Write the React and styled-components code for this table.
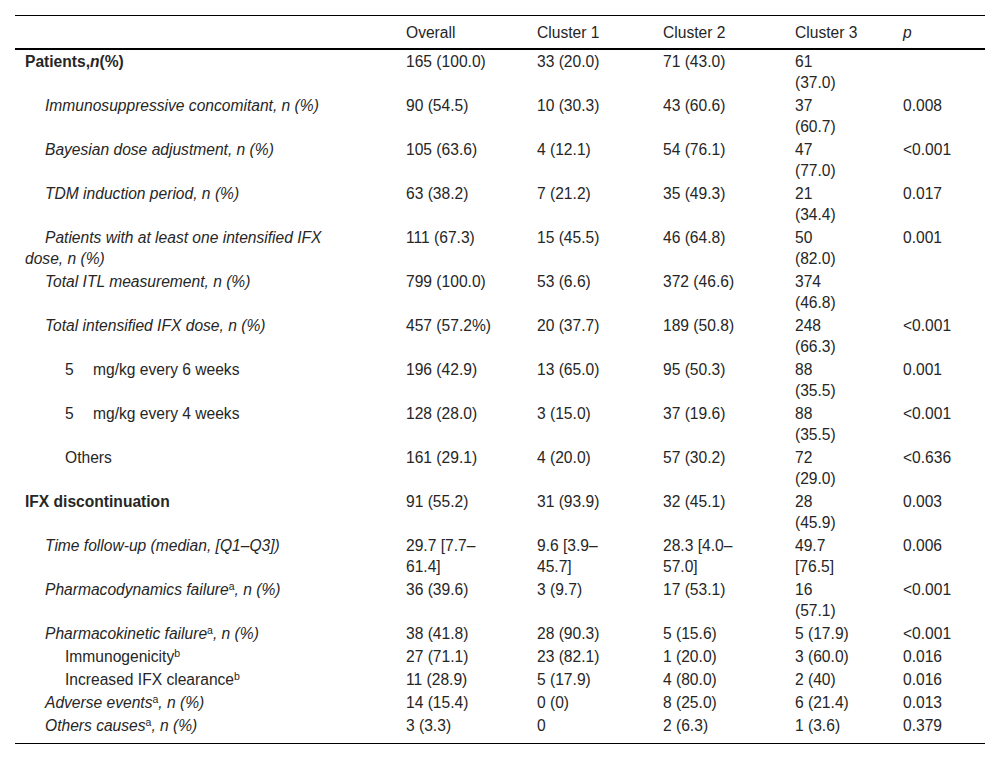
import React from "react";
import styled, { createGlobalStyle } from "styled-components";

const GlobalStyle = createGlobalStyle`
  body {
    margin: 0;
    background: #fff;
    font-family: "Liberation Sans", Arial, sans-serif;
    color: #262626;
  }
`;

const Page = styled.div`
  padding: 15px;
`;

const Table = styled.table`
  width: 970px;
  border-collapse: collapse;
  table-layout: fixed;
  font-size: 15.6px;
  line-height: 21px;
  border-top: 1px solid #000;
  border-bottom: 1px solid #000;
`;

// column widths + right padding that makes numbers wrap like the source
const cols = [
  { w: 381, pr: 51 },
  { w: 131, pr: 27 },
  { w: 126, pr: 36 },
  { w: 132, pr: 34 },
  { w: 108, pr: 40 },
  { w: 92, pr: 8 },
];

const HeadRow = styled.tr`
  border-bottom: 2px solid #000;
`;

const HeadCell = styled.th`
  text-align: left;
  font-weight: normal;
  white-space: nowrap;
  font-style: ${(p) => (p.$italic ? "italic" : "normal")};
  padding: 6px 0 5px 10px;
  vertical-align: top;
`;

const Row = styled.tr``;

const Cell = styled.td`
  vertical-align: top;
  padding: 1px ${(p) => p.$pr}px ${(p) => (p.$last ? 7 : 1)}px 10px;
`;

const LabelCell = styled(Cell)`
  text-indent: ${(p) => p.$level * 20}px;
  font-weight: ${(p) => (p.$bold ? "bold" : "normal")};
  font-style: ${(p) => (p.$italic ? "italic" : "normal")};
`;

const Sup = styled.sup`
  font-style: normal;
  font-size: 10.5px;
  line-height: 0;
  vertical-align: 5px;
`;

const Num = styled.span`
  display: inline-block;
  text-indent: 0;
  width: 28px;
`;

const rows = [
  { label: <>Patients,<i>n</i>(%)</>, bold: true, level: 0, v: ["165 (100.0)", "33 (20.0)", "71 (43.0)", "61 (37.0)", ""] },
  { label: "Immunosuppressive concomitant, n (%)", italic: true, level: 1, v: ["90 (54.5)", "10 (30.3)", "43 (60.6)", "37 (60.7)", "0.008"] },
  { label: "Bayesian dose adjustment, n (%)", italic: true, level: 1, v: ["105 (63.6)", "4 (12.1)", "54 (76.1)", "47 (77.0)", "<0.001"] },
  { label: "TDM induction period, n (%)", italic: true, level: 1, v: ["63 (38.2)", "7 (21.2)", "35 (49.3)", "21 (34.4)", "0.017"] },
  { label: "Patients with at least one intensified IFX dose, n (%)", italic: true, level: 1, v: ["111 (67.3)", "15 (45.5)", "46 (64.8)", "50 (82.0)", "0.001"] },
  { label: "Total ITL measurement, n (%)", italic: true, level: 1, v: ["799 (100.0)", "53 (6.6)", "372 (46.6)", "374 (46.8)", ""] },
  { label: "Total intensified IFX dose, n (%)", italic: true, level: 1, v: ["457 (57.2%)", "20 (37.7)", "189 (50.8)", "248 (66.3)", "<0.001"] },
  { label: <><Num>5</Num>mg/kg every 6 weeks</>, level: 2, v: ["196 (42.9)", "13 (65.0)", "95 (50.3)", "88 (35.5)", "0.001"] },
  { label: <><Num>5</Num>mg/kg every 4 weeks</>, level: 2, v: ["128 (28.0)", "3 (15.0)", "37 (19.6)", "88 (35.5)", "<0.001"] },
  { label: "Others", level: 2, v: ["161 (29.1)", "4 (20.0)", "57 (30.2)", "72 (29.0)", "<0.636"] },
  { label: "IFX discontinuation", bold: true, level: 0, v: ["91 (55.2)", "31 (93.9)", "32 (45.1)", "28 (45.9)", "0.003"] },
  { label: "Time follow-up (median, [Q1–Q3])", italic: true, level: 1, v: ["29.7 [7.7–61.4]", "9.6 [3.9–45.7]", "28.3 [4.0–57.0]", "49.7 [76.5]", "0.006"] },
  { label: <>Pharmacodynamics failure<Sup>a</Sup>, n (%)</>, italic: true, level: 1, v: ["36 (39.6)", "3 (9.7)", "17 (53.1)", "16 (57.1)", "<0.001"] },
  { label: <>Pharmacokinetic failure<Sup>a</Sup>, n (%)</>, italic: true, level: 1, v: ["38 (41.8)", "28 (90.3)", "5 (15.6)", "5 (17.9)", "<0.001"] },
  { label: <>Immunogenicity<Sup>b</Sup></>, level: 2, v: ["27 (71.1)", "23 (82.1)", "1 (20.0)", "3 (60.0)", "0.016"] },
  { label: <>Increased IFX clearance<Sup>b</Sup></>, level: 2, v: ["11 (28.9)", "5 (17.9)", "4 (80.0)", "2 (40)", "0.016"] },
  { label: <>Adverse events<Sup>a</Sup>, n (%)</>, italic: true, level: 1, v: ["14 (15.4)", "0 (0)", "8 (25.0)", "6 (21.4)", "0.013"] },
  { label: <>Others causes<Sup>a</Sup>, n (%)</>, italic: true, level: 1, v: ["3 (3.3)", "0", "2 (6.3)", "1 (3.6)", "0.379"] },
];

const heads = ["", "Overall", "Cluster 1", "Cluster 2", "Cluster 3", "p"];

export default function App() {
  return (
    <>
      <GlobalStyle />
      <Page>
        <Table>
          <colgroup>
            {cols.map((c, i) => (
              <col key={i} style={{ width: c.w }} />
            ))}
          </colgroup>
          <thead>
            <HeadRow>
              {heads.map((h, i) => (
                <HeadCell key={i} $italic={h === "p"}>
                  {h}
                </HeadCell>
              ))}
            </HeadRow>
          </thead>
          <tbody>
            {rows.map((r, ri) => {
              const last = ri === rows.length - 1;
              return (
                <Row key={ri}>
                  <LabelCell
                    $pr={cols[0].pr}
                    $level={r.level}
                    $bold={r.bold}
                    $italic={r.italic}
                    $last={last}
                  >
                    {r.label}
                  </LabelCell>
                  {r.v.map((val, ci) => (
                    <Cell key={ci} $pr={cols[ci + 1].pr} $last={last}>
                      {val}
                    </Cell>
                  ))}
                </Row>
              );
            })}
          </tbody>
        </Table>
      </Page>
    </>
  );
}
